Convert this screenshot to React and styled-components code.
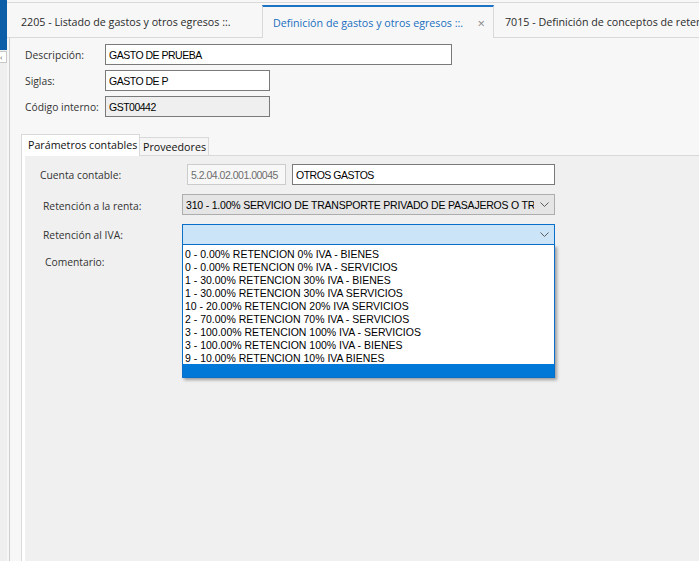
import React from "react";
import styled, { createGlobalStyle } from "styled-components";

const uiFont = `"Open Sans", "Noto Sans", sans-serif`;
const dataFont = `"Liberation Sans", Arial, sans-serif`;

const GlobalStyle = createGlobalStyle`
  *, *::before, *::after {
    box-sizing: border-box;
  }

  html, body {
    margin: 0;
    padding: 0;
    background: #f0f0f0;
    overflow: hidden;
  }

  #root {
    width: 699px;
    height: 561px;
  }
`;

const retenciones = [
  "0 - 0.00% RETENCION 0% IVA - BIENES",
  "0 - 0.00% RETENCION 0% IVA - SERVICIOS",
  "1 - 30.00% RETENCION 30% IVA - BIENES",
  "1 - 30.00% RETENCION 30% IVA SERVICIOS",
  "10 - 20.00% RETENCION 20% IVA SERVICIOS",
  "2 - 70.00% RETENCION 70% IVA - SERVICIOS",
  "3 - 100.00% RETENCION 100% IVA - SERVICIOS",
  "3 - 100.00% RETENCION 100% IVA - BIENES",
  "9 - 10.00% RETENCION 10% IVA BIENES"
];

const Chevron = () => (
  <svg width="9" height="5" viewBox="0 0 9 5">
    <polyline
      points="0.5,0.5 4.5,4.5 8.5,0.5"
      fill="none"
      stroke="#5c5c5c"
      strokeWidth="1"
    />
  </svg>
);

const App = () => {
  return (
    <Window>
      <GlobalStyle />
      <SideStrip>
        <SideBlue />
        <SideToggle>‹</SideToggle>
      </SideStrip>

      <Document>
        <TabStrip>
          <DocTab>2205 - Listado de gastos y otros egresos ::.</DocTab>
          <DocTab active>
            <span>Definición de gastos y otros egresos ::.</span>
            <CloseMark>×</CloseMark>
          </DocTab>
          <DocTab last>7015 - Definición de conceptos de retenciones ::.</DocTab>
        </TabStrip>

        <DocBody>
          <FieldList>
            <Field>
              <Label width={80}>Descripción:</Label>
              <TextBox width={347}>GASTO DE PRUEBA</TextBox>
            </Field>
            <Field>
              <Label width={80}>Siglas:</Label>
              <TextBox width={165}>GASTO DE P</TextBox>
            </Field>
            <Field>
              <Label width={80}>Código interno:</Label>
              <TextBox width={165} readOnly>
                GST00442
              </TextBox>
            </Field>
          </FieldList>

          <InnerTabs>
            <InnerTabHeaders>
              <InnerTab active width={119}>
                Parámetros contables
              </InnerTab>
              <InnerTab width={69}>Proveedores</InnerTab>
            </InnerTabHeaders>

            <Panel>
              <PanelInner>
                <PanelRow>
                  <Label indent={15} width={162}>
                    Cuenta contable:
                  </Label>
                  <TextBox width={99} disabled>
                    5.2.04.02.001.00045
                  </TextBox>
                  <Spacer />
                  <TextBox width={263}>OTROS GASTOS</TextBox>
                </PanelRow>

                <PanelRow>
                  <Label indent={18} width={157} low>
                    Retención a la renta:
                  </Label>
                  <ComboBox width={373}>
                    <ComboText>
                      310 - 1.00% SERVICIO DE TRANSPORTE PRIVADO DE PASAJEROS O
                      TRANSPORTE PUBLICO O DE CARGA
                    </ComboText>
                    <Chevron />
                  </ComboBox>
                </PanelRow>

                <PanelRow>
                  <Label indent={18} width={157}>
                    Retención al IVA:
                  </Label>
                  <ComboWrap>
                    <ComboBox width={373} focused>
                      <ComboText />
                      <Chevron />
                    </ComboBox>
                    <DropList>
                      {retenciones.map(item => (
                        <DropItem key={item}>{item}</DropItem>
                      ))}
                      <DropItem selected />
                    </DropList>
                  </ComboWrap>
                </PanelRow>

                <PanelRow short>
                  <Label indent={20} width={157}>
                    Comentario:
                  </Label>
                </PanelRow>
              </PanelInner>
            </Panel>
          </InnerTabs>
        </DocBody>
      </Document>
    </Window>
  );
};

const Window = styled.div`
  display: flex;
  width: 699px;
  height: 561px;
  overflow: hidden;
  font-family: ${uiFont};
`;

const SideStrip = styled.div`
  flex: 0 0 7px;
  display: flex;
  flex-direction: column;
  background: #efefef;
`;

const SideBlue = styled.div`
  height: 50px;
  background: #0c5ea8;
`;

const SideToggle = styled.div`
  margin-top: 1px;
  width: 7px;
  height: 12px;
  background: #fff;
  border: 1px solid #c8c8c8;
  border-left: none;
  font-size: 8px;
  line-height: 10px;
  color: #555;
  overflow: hidden;
`;

const Document = styled.div`
  flex: 1;
  min-width: 0;
  display: flex;
  flex-direction: column;
  background: #f7f7f7;
`;

const TabStrip = styled.div`
  display: flex;
  height: 36px;
  margin-top: 2px;
  border-top: 1px solid #d9d9d9;
  flex: 0 0 auto;
`;

const DocTab = styled.div`
  display: flex;
  align-items: center;
  justify-content: ${props => (props.active ? "space-between" : "flex-start")};
  white-space: nowrap;
  overflow: hidden;
  font-size: 10.7px;
  flex: ${props => (props.last ? "1" : "0 0 auto")};
  width: ${props => (props.active ? "232px" : props.last ? "auto" : "255px")};
  padding: ${props =>
    props.active ? "1px 8px 0 10px" : props.last ? "3px 0 0 11px" : "3px 0 0 14px"};
  color: ${props => (props.active ? "#1a6fc0" : "#2b2b2b")};
  margin-top: ${props => (props.active ? "2px" : "0")};
  border-bottom: ${props => (props.active ? "none" : "1px solid #d9d9d9")};
  border-top: ${props => (props.active ? "2px solid #1c72c4" : "none")};
  border-left: ${props => (props.active ? "1px solid #d9d9d9" : "none")};
  border-right: ${props => (props.active ? "1px solid #d9d9d9" : "none")};
`;

const CloseMark = styled.span`
  color: #8a8a8a;
  font-size: 13px;
  line-height: 1;
`;

const DocBody = styled.div`
  flex: 1;
  min-height: 0;
  display: flex;
  flex-direction: column;
  margin-left: 2px;
  border-left: 1px solid #cfcfcf;
  padding: 6px 0 0 11px;
`;

const FieldList = styled.div`
  display: flex;
  flex-direction: column;
  gap: 5px;
  padding-left: 4px;
`;

const Field = styled.div`
  display: flex;
  align-items: center;
  height: 21px;
`;

const Label = styled.div`
  flex: 0 0 ${props => props.width}px;
  padding-left: ${props => props.indent || 0}px;
  padding-top: ${props => (props.low ? "2px" : "0")};
  font-size: 10.3px;
  color: #333;
  white-space: nowrap;
`;

const TextBox = styled.div`
  flex: 0 0 ${props => props.width}px;
  height: 21px;
  display: flex;
  align-items: center;
  padding: 0 3px;
  overflow: hidden;
  white-space: nowrap;
  font-family: ${dataFont};
  font-size: 10.5px;
  letter-spacing: -0.5px;
  color: ${props => (props.disabled ? "#6d6d6d" : "#000")};
  background: ${props =>
    props.disabled ? "#f7f7f7" : props.readOnly ? "#efefef" : "#fff"};
  border: 1px solid ${props => (props.disabled ? "#cccccc" : "#7a7a7a")};
`;

const InnerTabs = styled.div`
  flex: 1;
  display: flex;
  flex-direction: column;
  margin-top: 17px;
`;

const InnerTabHeaders = styled.div`
  display: flex;
  align-items: flex-end;
  height: 21px;
`;

const InnerTab = styled.div`
  flex: 0 0 ${props => props.width}px;
  height: ${props => (props.active ? "22px" : "18px")};
  margin-bottom: ${props => (props.active ? "-1px" : "0")};
  position: relative;
  z-index: ${props => (props.active ? 1 : 0)};
  display: flex;
  align-items: center;
  padding-left: ${props => (props.active ? "6px" : "3px")};
  padding-bottom: ${props => (props.active ? "1px" : "0")};
  font-size: 10.7px;
  color: #111;
  white-space: nowrap;
  background: ${props => (props.active ? "#fff" : "#f5f5f5")};
  border: 1px solid #d9d9d9;
  border-bottom: none;
  border-left: ${props => (props.active ? "1px solid #d9d9d9" : "none")};
`;

const Panel = styled.div`
  flex: 1;
  display: flex;
  background: #fff;
  border-top: 1px solid #d9d9d9;
  border-left: 1px solid #d9d9d9;
  padding-left: 3px;
`;

const PanelInner = styled.div`
  flex: 1;
  display: flex;
  flex-direction: column;
  gap: 9px;
  padding-top: 8px;
  background: #f0f0f0;
`;

const PanelRow = styled.div`
  display: flex;
  align-items: center;
  height: ${props => (props.short ? "16px" : "21px")};
`;

const Spacer = styled.div`
  flex: 0 0 6px;
`;

const ComboWrap = styled.div`
  position: relative;
  display: flex;
`;

const ComboBox = styled.div`
  flex: 0 0 ${props => props.width}px;
  width: ${props => props.width}px;
  height: 21px;
  display: flex;
  align-items: center;
  gap: 6px;
  padding: 0 5px 0 3px;
  background: ${props => (props.focused ? "#cce4f7" : "#e5e5e5")};
  border: 1px solid ${props => (props.focused ? "#0a6fc9" : "#adadad")};
`;

const ComboText = styled.div`
  flex: 1;
  overflow: hidden;
  white-space: nowrap;
  font-family: ${dataFont};
  font-size: 10.5px;
  letter-spacing: -0.2px;
  color: #000;
`;

const DropList = styled.div`
  position: absolute;
  top: 100%;
  left: 0;
  width: 373px;
  z-index: 5;
  padding-top: 2px;
  background: #fff;
  border: 1px solid #0a6fc9;
  border-top: none;
  box-shadow: 2px 2px 3px rgba(0, 0, 0, 0.35);
`;

const DropItem = styled.div`
  height: 13px;
  line-height: 13px;
  padding: 1px 0 0 2px;
  white-space: nowrap;
  font-family: ${dataFont};
  font-size: 10.5px;
  color: #000;
  background: ${props => (props.selected ? "#0078d7" : "transparent")};
`;

export default App;
